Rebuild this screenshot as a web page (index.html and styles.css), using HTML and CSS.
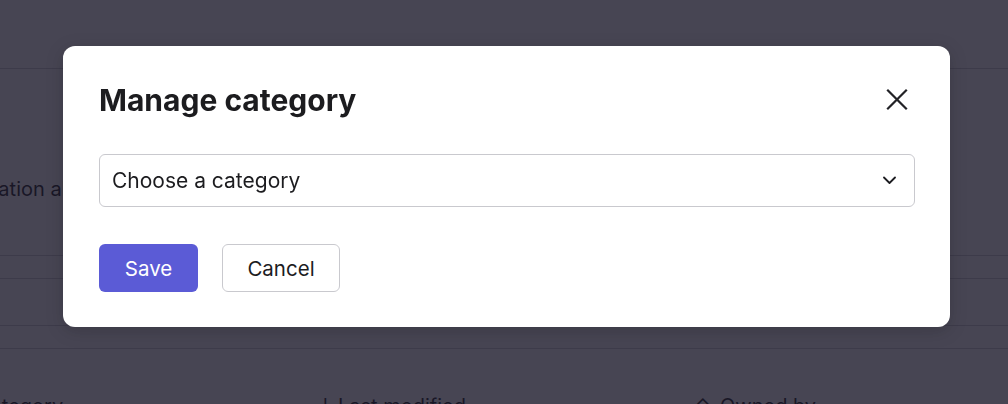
FILE: index.html
```html
<!DOCTYPE html>
<html lang="en">
<head>
<meta charset="utf-8">
<title>Manage category</title>
<link rel="stylesheet" href="styles.css">
</head>
<body>
<div class="page">
  <div class="topbar"></div>
  <div class="intro"><p class="intro-text">Information about this category</p></div>
  <div class="rule rule-a"></div>
  <div class="rule rule-b"></div>
  <div class="rule rule-c"></div>
  <div class="rule rule-d"></div>
  <div class="thead">
    <span class="th th-cat">Category</span>
    <span class="th th-mod"><span class="sort sort-mod">↓</span>Last modified</span>
    <span class="th th-own"><span class="sort sort-own">⌃</span>Owned by</span>
  </div>
</div>

<div class="overlay">
  <div class="modal" role="dialog" aria-labelledby="mtitle">
    <div class="modal-head">
      <h2 id="mtitle" class="modal-title">Manage category</h2>
      <button class="close" aria-label="Close">
        <svg width="24" height="24" viewBox="0 0 24 24" fill="none" stroke="#222226" stroke-width="2.2" stroke-linecap="square"><path d="M3 2.5 L21 20.5 M21 2.5 L3 20.5"/></svg>
      </button>
    </div>
    <div class="select">
      <span class="select-text">Choose a category</span>
      <svg class="chev" width="13" height="9" viewBox="0 0 13 9" fill="none" stroke="#1c1c20" stroke-width="1.8" stroke-linecap="round" stroke-linejoin="round"><path d="M1 1.5 L6.5 7 L12 1.5"/></svg>
    </div>
    <div class="actions">
      <button class="btn btn-primary">Save</button>
      <button class="btn btn-secondary">Cancel</button>
    </div>
  </div>
</div>
</body>
</html>
```

FILE: styles.css
```css
html, body {
  margin: 0;
  padding: 0;
}
body {
  width: 1008px;
  height: 404px;
  overflow: hidden;
  background: #ffffff;
  font-family: Inter, "Noto Sans", "Liberation Sans", sans-serif;
  color: #1c1c1f;
}
.page {
  width: 1008px;
  height: 404px;
  overflow: hidden;
}
.topbar {
  height: 68px;
  border-bottom: 1px solid #cdcdd2;
}
.intro {
  height: 186px;
  overflow: hidden;
}
.intro-text {
  margin: 108px 0 0 -63px;
  font-size: 20px;
  line-height: 24px;
  white-space: nowrap;
}
.rule {
  border-top: 1px solid #cdcdd2;
}
.rule-a { height: 22px; }
.rule-b { height: 46px; }
.rule-c { height: 22px; }
.rule-d { height: 45px; }
.thead {
  display: flex;
  font-size: 20px;
  line-height: 24px;
  white-space: nowrap;
}
.th-cat { margin-left: -24px; width: 341px; }
.th-mod { width: 378px; }
.sort { display: inline-block; }
.sort-mod { width: 12px; margin-right: 9px; }
.sort-own { width: 18px; margin-right: 7px; }

.overlay {
  position: fixed;
  inset: 0;
  background: rgba(25, 22, 40, 0.8);
  display: flex;
  align-items: flex-start;
  padding: 46px 0 0 63px;
}
.modal {
  width: 887px;
  box-sizing: border-box;
  background: #ffffff;
  border-radius: 12px;
  padding: 36px 35px 35px 36px;
  box-shadow: 0 4px 18px rgba(0, 0, 0, 0.18);
}
.modal-head {
  display: flex;
  align-items: center;
  justify-content: space-between;
  height: 36px;
}
.modal-title {
  margin: 0;
  font-size: 30px;
  line-height: 36px;
  font-weight: 700;
  color: #1c1c1f;
}
.close {
  border: 0;
  background: transparent;
  padding: 0;
  width: 24px;
  height: 24px;
  margin-right: 6px;
  display: flex;
  cursor: pointer;
}
.select {
  margin-top: 36px;
  height: 53px;
  box-sizing: border-box;
  border: 1px solid #c9c9ce;
  border-radius: 6px;
  display: flex;
  align-items: center;
  justify-content: space-between;
  padding: 0 18px 0 12px;
}
.select-text {
  font-size: 21px;
  color: #1c1c1f;
}
.chev { display: block; }
.actions {
  margin-top: 37px;
  display: flex;
  gap: 24px;
}
.btn {
  height: 48px;
  box-sizing: border-box;
  border-radius: 6px;
  font-family: inherit;
  font-size: 20.5px;
  padding: 0;
  cursor: pointer;
}
.btn-primary {
  width: 99px;
  background: #5b5bd6;
  border: 0;
  color: #ffffff;
}
.btn-secondary {
  width: 118px;
  background: #ffffff;
  border: 1px solid #c9c9ce;
  color: #1c1c1f;
}
```
